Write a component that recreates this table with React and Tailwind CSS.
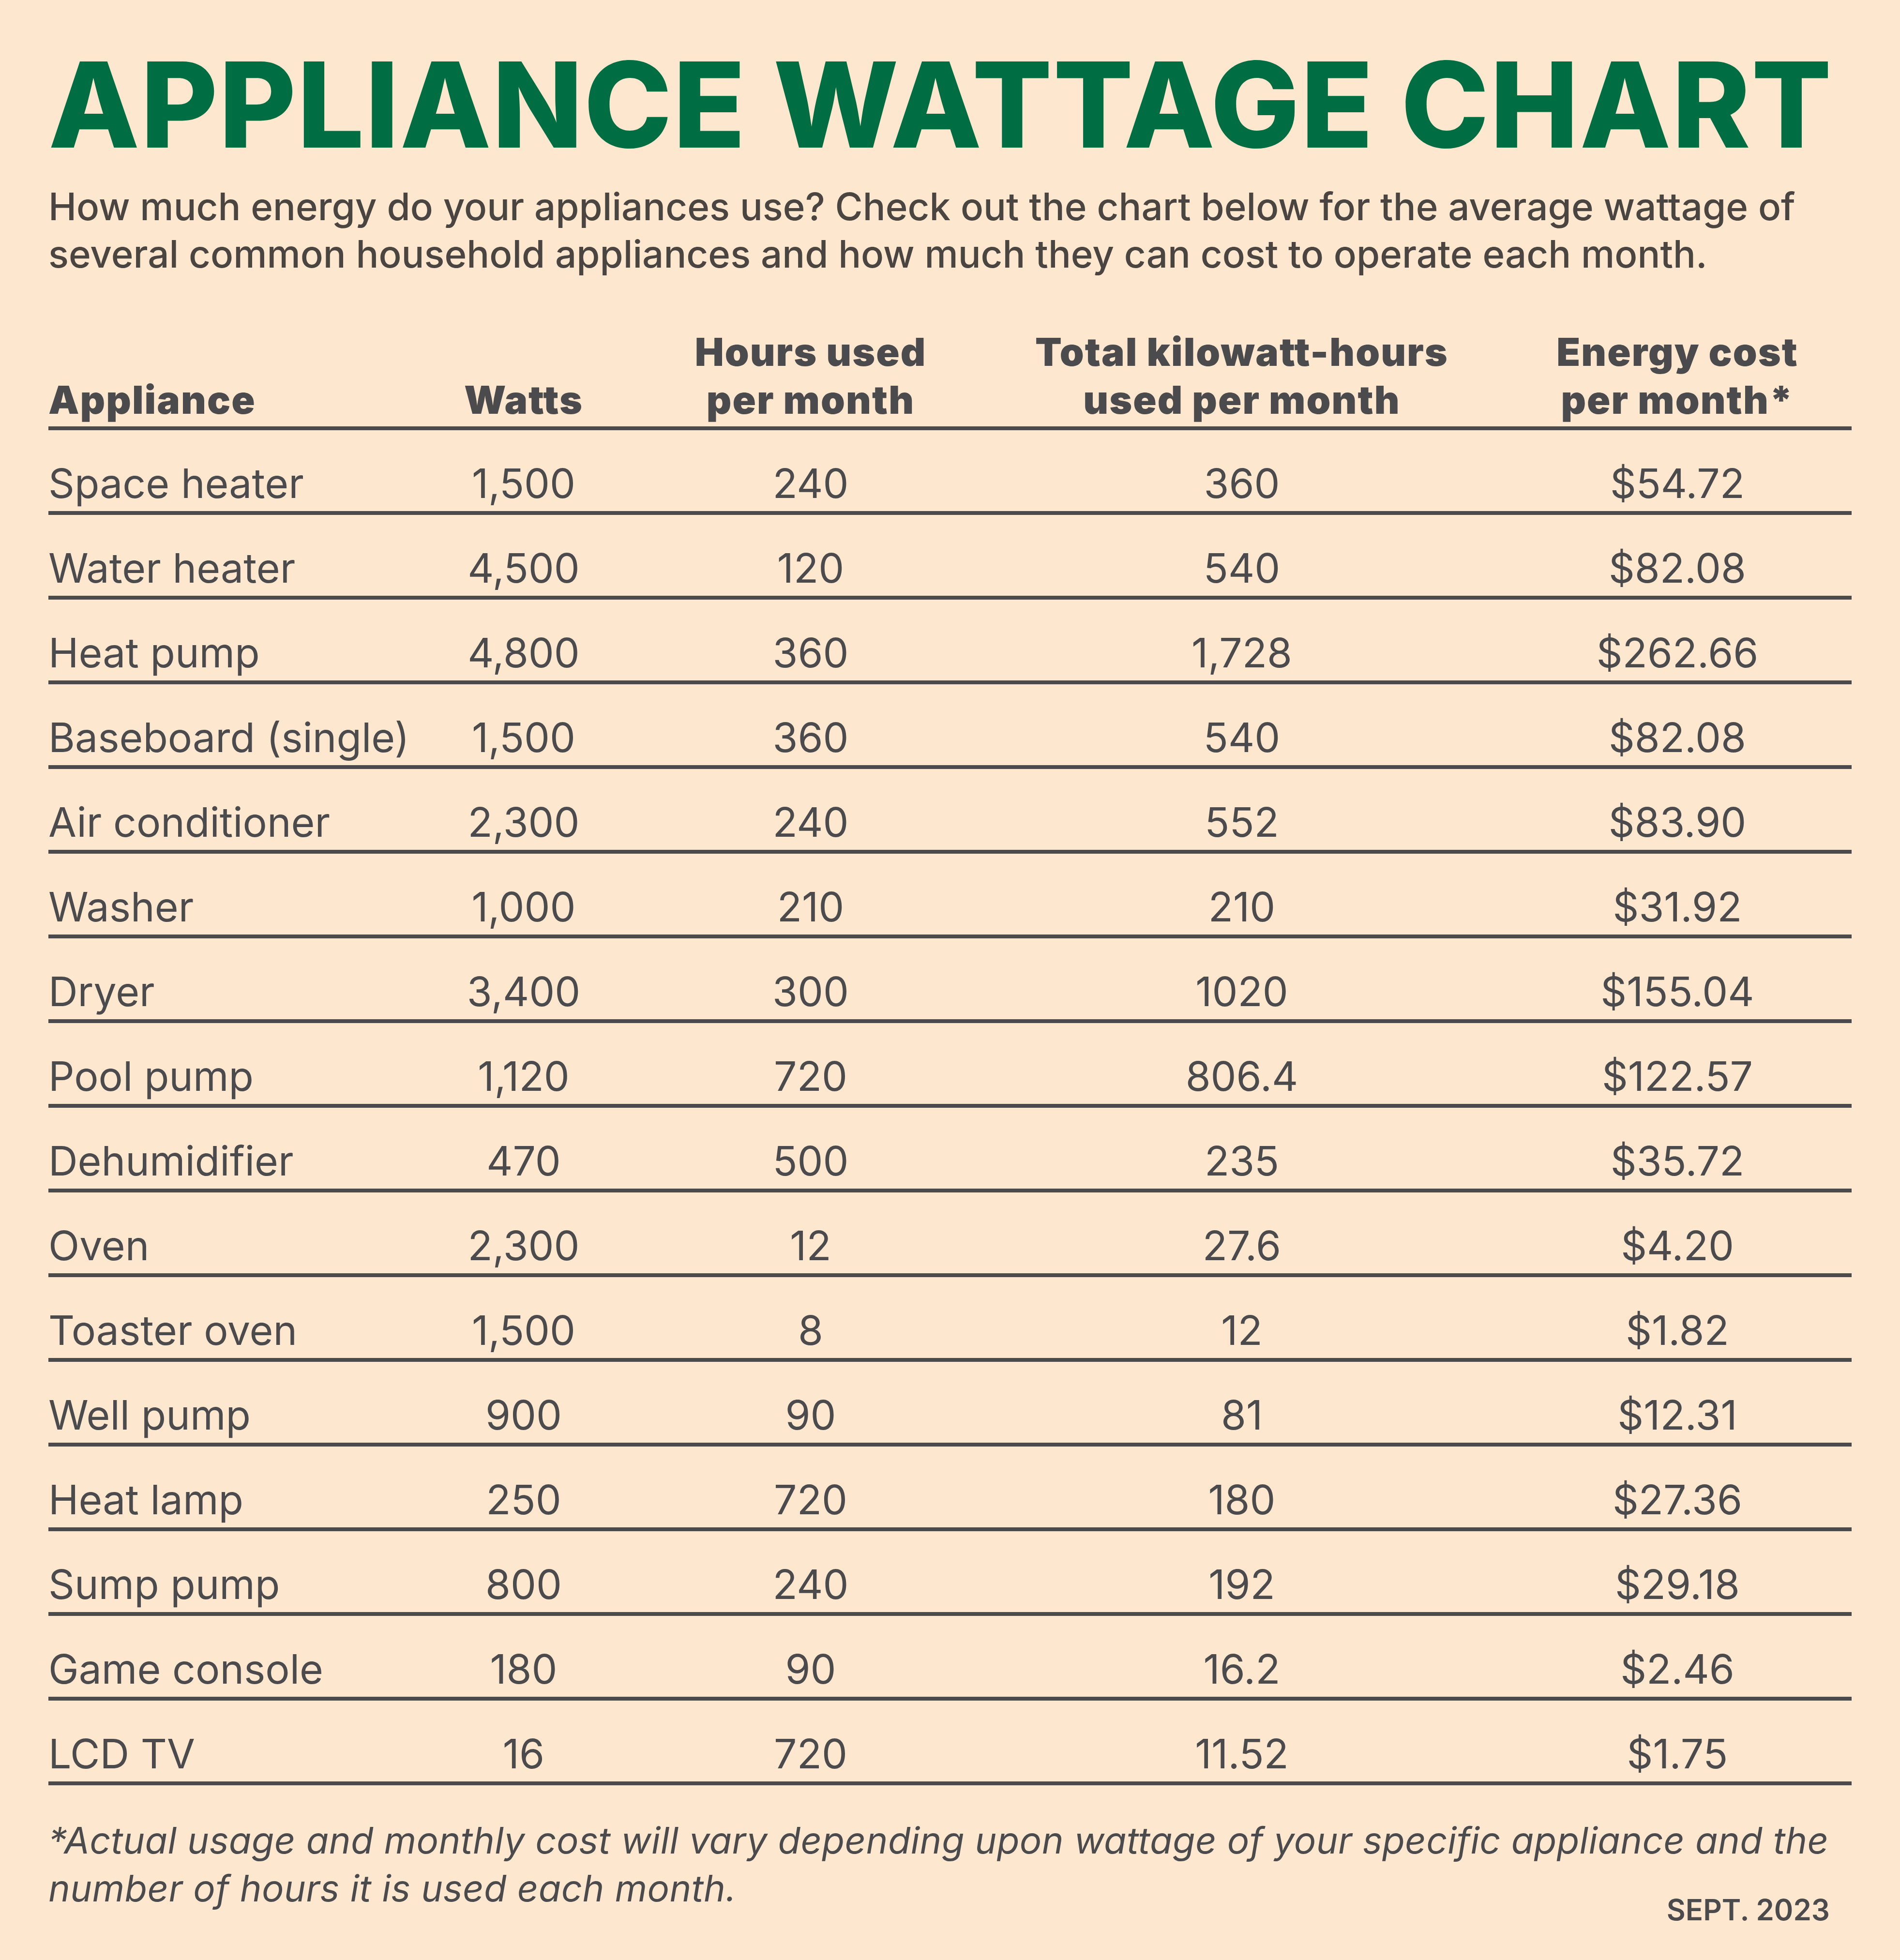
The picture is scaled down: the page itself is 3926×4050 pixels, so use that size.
import React from "react";

const rows = [
  ["Space heater", "1,500", "240", "360", "$54.72"],
  ["Water heater", "4,500", "120", "540", "$82.08"],
  ["Heat pump", "4,800", "360", "1,728", "$262.66"],
  ["Baseboard (single)", "1,500", "360", "540", "$82.08"],
  ["Air conditioner", "2,300", "240", "552", "$83.90"],
  ["Washer", "1,000", "210", "210", "$31.92"],
  ["Dryer", "3,400", "300", "1020", "$155.04"],
  ["Pool pump", "1,120", "720", "806.4", "$122.57"],
  ["Dehumidifier", "470", "500", "235", "$35.72"],
  ["Oven", "2,300", "12", "27.6", "$4.20"],
  ["Toaster oven", "1,500", "8", "12", "$1.82"],
  ["Well pump", "900", "90", "81", "$12.31"],
  ["Heat lamp", "250", "720", "180", "$27.36"],
  ["Sump pump", "800", "240", "192", "$29.18"],
  ["Game console", "180", "90", "16.2", "$2.46"],
  ["LCD TV", "16", "720", "11.52", "$1.75"],
];

const font = { fontFamily: "Inter, 'Noto Sans', sans-serif" };

export default function App() {
  return (
    <div
      className="w-[3926px] h-[4050px] bg-[#fde8cf] px-[100px] flex flex-col text-[#4b4b4d]"
      style={font}
    >
      <h1 className="mt-[94px] text-[245px] leading-none font-extrabold text-[#006d43] whitespace-nowrap tracking-[2px]">
        APPLIANCE WATTAGE CHART
      </h1>
      <p className="mt-[39px] text-[78px] leading-[98px] font-medium text-[#4a4541]">
        How much energy do your appliances use? Check out the chart below for the average wattage of
        <br />
        several common household appliances and how much they can cost to operate each month.
      </p>

      <div className="mt-[103px] grid grid-cols-[782px_400px_786px_996px_1fr] items-end border-b-[8px] border-[#4b4b4d] pb-[6px] text-[80px] leading-[99px] font-black tracking-[2px]">
        <div>Appliance</div>
        <div className="text-center">Watts</div>
        <div className="text-center">
          Hours used
          <br />
          per month
        </div>
        <div className="text-center">
          Total kilowatt-hours
          <br />
          used per month
        </div>
        <div className="text-center pl-[42px]">
          Energy cost
          <br />
          per month*
        </div>
      </div>

      {rows.map((r) => (
        <div
          key={r[0]}
          className="h-[175px] grid grid-cols-[782px_400px_786px_996px_1fr] items-end border-b-[8px] border-[#4b4b4d] pb-[15px] text-[84px] leading-none font-normal"
        >
          <div>{r[0]}</div>
          <div className="text-center">{r[1]}</div>
          <div className="text-center">{r[2]}</div>
          <div className="text-center">{r[3]}</div>
          <div className="text-center pl-[42px]">{r[4]}</div>
        </div>
      ))}

      <p className="mt-[64px] text-[76px] leading-[99px] italic font-normal tracking-[0.35px]">
        *Actual usage and monthly cost will vary depending upon wattage of your specific appliance and the
        <br />
        number of hours it is used each month.
      </p>
      <div className="-mt-[35px] pr-[45px] text-right text-[60px] leading-none font-semibold">
        SEPT. 2023
      </div>
    </div>
  );
}
